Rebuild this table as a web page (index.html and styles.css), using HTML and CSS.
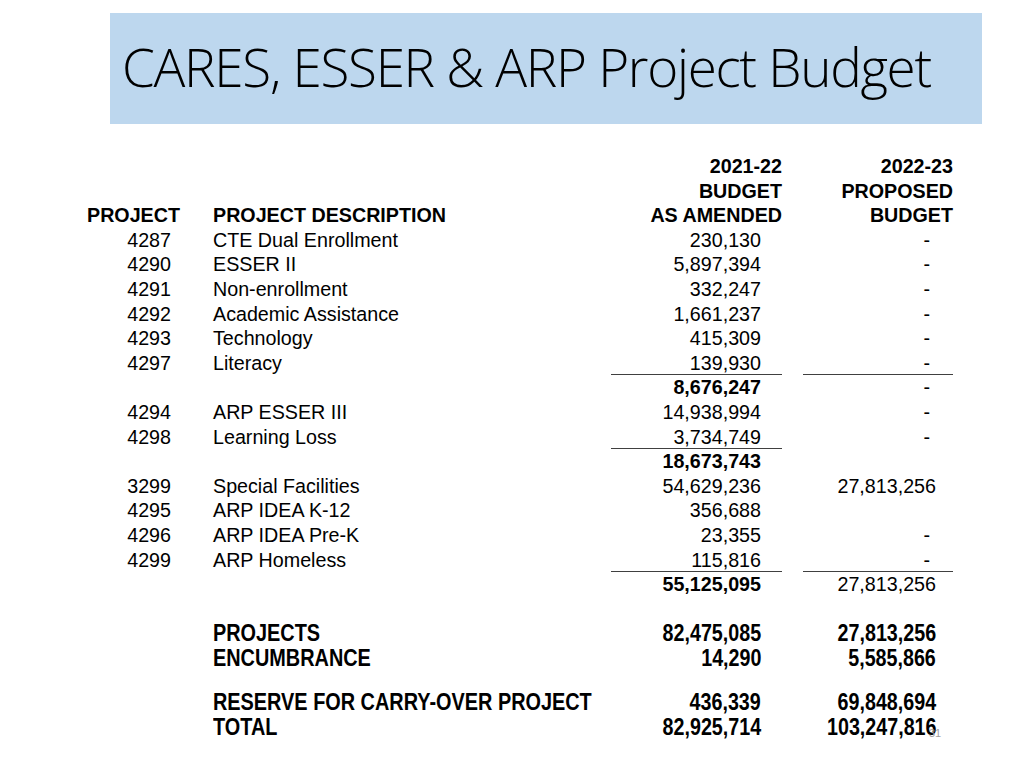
FILE: index.html
```html
<!DOCTYPE html>
<html>
<head>
<meta charset="utf-8">
<link rel="stylesheet" href="styles.css">
</head>
<body>
<div class="slide">
  <header class="title-box">
    <h1 class="title">CARES, ESSER &amp; ARP Project Budget</h1>
  </header>
  <div class="table">
    <div class="c1"></div><div class="c2"></div><div class="c3 b">2021-22</div><div class="c4 b">2022-23</div>
    <div class="c1"></div><div class="c2"></div><div class="c3 b">BUDGET</div><div class="c4 b">PROPOSED</div>
    <div class="c1 b">PROJECT</div><div class="c2 b">PROJECT DESCRIPTION</div><div class="c3 b">AS AMENDED</div><div class="c4 b">BUDGET</div>

    <div class="c1 n">4287</div><div class="c2">CTE Dual Enrollment</div><div class="c3 n">230,130</div><div class="c4 d">-</div>
    <div class="c1 n">4290</div><div class="c2">ESSER II</div><div class="c3 n">5,897,394</div><div class="c4 d">-</div>
    <div class="c1 n">4291</div><div class="c2">Non-enrollment</div><div class="c3 n">332,247</div><div class="c4 d">-</div>
    <div class="c1 n">4292</div><div class="c2">Academic Assistance</div><div class="c3 n">1,661,237</div><div class="c4 d">-</div>
    <div class="c1 n">4293</div><div class="c2">Technology</div><div class="c3 n">415,309</div><div class="c4 d">-</div>
    <div class="c1 n">4297</div><div class="c2">Literacy</div><div class="c3 n u">139,930</div><div class="c4 d u">-</div>
    <div class="c1"></div><div class="c2"></div><div class="c3 n b">8,676,247</div><div class="c4 d">-</div>
    <div class="c1 n">4294</div><div class="c2">ARP ESSER III</div><div class="c3 n">14,938,994</div><div class="c4 d">-</div>
    <div class="c1 n">4298</div><div class="c2">Learning Loss</div><div class="c3 n u">3,734,749</div><div class="c4 d">-</div>
    <div class="c1"></div><div class="c2"></div><div class="c3 n b">18,673,743</div><div class="c4"></div>
    <div class="c1 n">3299</div><div class="c2">Special Facilities</div><div class="c3 n">54,629,236</div><div class="c4 n">27,813,256</div>
    <div class="c1 n">4295</div><div class="c2">ARP IDEA K-12</div><div class="c3 n">356,688</div><div class="c4"></div>
    <div class="c1 n">4296</div><div class="c2">ARP IDEA Pre-K</div><div class="c3 n">23,355</div><div class="c4 d">-</div>
    <div class="c1 n">4299</div><div class="c2">ARP Homeless</div><div class="c3 n u">115,816</div><div class="c4 d u">-</div>
    <div class="c1"></div><div class="c2"></div><div class="c3 n b">55,125,095</div><div class="c4 n">27,813,256</div>
    <div class="spacer"></div>

    <div class="c1"></div><div class="c2 s"><span>PROJECTS</span></div><div class="c3 n s"><span>82,475,085</span></div><div class="c4 n s"><span>27,813,256</span></div>
    <div class="c1"></div><div class="c2 s"><span>ENCUMBRANCE</span></div><div class="c3 n s"><span>14,290</span></div><div class="c4 n s"><span>5,585,866</span></div>
    <div class="spacer small"></div>
    <div class="c1"></div><div class="c2 s"><span>RESERVE FOR CARRY-OVER PROJECT</span></div><div class="c3 n s"><span>436,339</span></div><div class="c4 n s"><span>69,848,694</span></div>
    <div class="c1"></div><div class="c2 s"><span>TOTAL</span></div><div class="c3 n s"><span>82,925,714</span></div><div class="c4 n s"><span>103,247,816</span></div>
  </div>
  <div class="page-num">31</div>
</div>
</body>
</html>
```

FILE: styles.css
```css
html, body {
  margin: 0;
  padding: 0;
  background: #ffffff;
}

.slide {
  position: relative;
  width: 1024px;
  height: 768px;
  overflow: hidden;
  padding-top: 13px;
  box-sizing: border-box;
}

.title-box {
  margin-left: 110px;
  width: 872px;
  height: 111px;
  background: #bdd7ee;
  box-sizing: border-box;
  padding-left: 12px;
  display: flex;
  align-items: center;
}

.title {
  margin: 0;
  font-family: "Open Sans", sans-serif;
  font-weight: 300;
  font-size: 53px;
  letter-spacing: -1.3px;
  color: #000;
  line-height: 1;
  padding-bottom: 4px;
}

.table {
  margin-top: 30px;
  margin-left: 80px;
  display: grid;
  grid-template-columns: 100px 431px 171px 171px;
  column-gap: 0;
  font-family: "Liberation Sans", Arial, sans-serif;
  font-size: 19.7px;
  line-height: 24.6px;
  color: #000;
}

.table > div {
  white-space: nowrap;
  height: 24.6px;
}

.c1 { text-align: right; }
.c2 { padding-left: 33px; }
.c3 { text-align: right; }
.c4 { text-align: right; margin-left: 21px; }

.b { font-weight: bold; }

.c1.n { padding-right: 9px; }
.c3.n { padding-right: 21px; }
.c4.n { padding-right: 17px; }
.c4.d { padding-right: 23px; }

.u { box-shadow: inset 0 -1px 0 #404040; }

.spacer {
  grid-column: 1 / -1;
  height: 24.6px;
}
.table > .spacer.small { height: 19.6px; }

.s {
  font-weight: bold;
  font-size: 24px;
}

.s > span {
  display: inline-block;
  transform: scaleX(0.82);
  transform-origin: right center;
}

.c2.s > span {
  transform: scaleX(0.828);
  transform-origin: left center;
}

.page-num {
  position: absolute;
  left: 929px;
  top: 727px;
  font-family: "Liberation Sans", Arial, sans-serif;
  font-size: 11px;
  color: #a0a0a0;
}
```
